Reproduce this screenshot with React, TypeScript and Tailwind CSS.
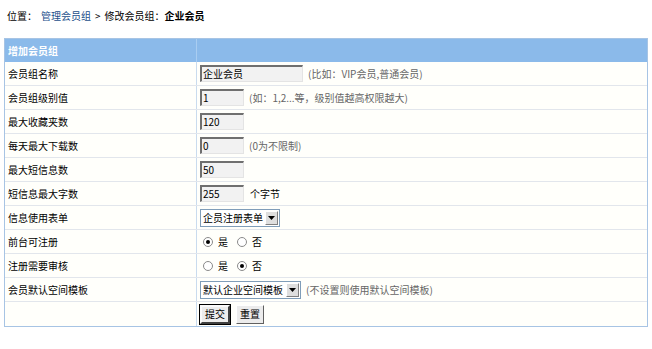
import React from 'react'

const font = { fontFamily: '"Noto Sans CJK SC", "Noto Sans", sans-serif' }

function TextBox({ value, wide }: { value: string; wide?: boolean }) {
  return (
    <div
      className={`h-[17px] ${wide ? 'w-[103px]' : 'w-[44px]'} bg-[#f2f2f2] border-t-2 border-l-2 border-b border-r border-t-[#6f6f6f] border-l-[#6f6f6f] border-b-[#e4e4e4] border-r-[#e4e4e4] flex items-center pl-[1px] text-[10px] leading-none text-black`}
    >
      {value}
    </div>
  )
}

function Select({ value, width }: { value: string; width: string }) {
  return (
    <div className={`h-[18px] ${width} border border-[#7f9db9] bg-white flex items-center text-[10px]`}>
      <span className="flex-1 pl-[2px] leading-none">{value}</span>
      <span className="h-[14px] w-[13px] mr-[1px] bg-[#dedede] border border-t-white border-l-white border-b-[#808080] border-r-[#808080] flex items-center justify-center">
        <svg width="7" height="4" viewBox="0 0 7 4">
          <path d="M0 0h7L3.5 4z" fill="#000" />
        </svg>
      </span>
    </div>
  )
}

function Radio({ checked }: { checked?: boolean }) {
  return (
    <span className="w-[10px] h-[10px] rounded-full border border-[#8a8a8a] bg-white flex items-center justify-center">
      {checked && <span className="w-[4px] h-[4px] rounded-full bg-black" />}
    </span>
  )
}

function YesNo({ yes }: { yes: boolean }) {
  return (
    <div className="flex items-center gap-[5px] pl-[3px] text-[10px]">
      <Radio checked={yes} />
      <span className="mr-[4px]">是</span>
      <Radio checked={!yes} />
      <span>否</span>
    </div>
  )
}

function Row({ label, children, last }: { label: string; children: React.ReactNode; last?: boolean }) {
  return (
    <div className={`flex h-[24px] bg-[#fffffb] ${last ? '' : 'border-b border-[#e2e6ec]'}`}>
      <div className="w-[192px] shrink-0 border-r border-[#c9dbee] flex items-center pl-[3px]">{label}</div>
      <div className="flex-1 flex items-center gap-[5px] pl-[3px]">{children}</div>
    </div>
  )
}

const Hint = ({ children }: { children: React.ReactNode }) => (
  <span className="text-[#666] text-[10px]">{children}</span>
)

export default function App() {
  return (
    <div className="w-[652px] h-[349px] bg-white text-black text-[10px]" style={font}>
      {/* breadcrumb */}
      <div className="h-[30px] flex items-center pl-[7px] pt-[1px]">
        <span>位置：</span>
        <span className="ml-[4px] text-[#1d4f8c]">管理会员组</span>
        <span className="mx-[4px]">&gt;</span>
        <span>修改会员组：</span>
        <span className="font-bold">企业会员</span>
      </div>

      <div className="mx-[4px] mt-[8px] border border-[#a7c4e4]">
        <div className="flex h-[23px] bg-[#8bbaea] text-white font-bold">
          <div className="w-[192px] border-r border-[#a9cdf1] flex items-center pl-[3px]">增加会员组</div>
          <div className="flex-1" />
        </div>

        <Row label="会员组名称">
          <TextBox value="企业会员" wide />
          <Hint>(比如：VIP会员,普通会员)</Hint>
        </Row>
        <Row label="会员组级别值">
          <TextBox value="1" />
          <Hint>(如：1,2...等，级别值越高权限越大)</Hint>
        </Row>
        <Row label="最大收藏夹数">
          <TextBox value="120" />
        </Row>
        <Row label="每天最大下载数">
          <TextBox value="0" />
          <Hint>(0为不限制)</Hint>
        </Row>
        <Row label="最大短信息数">
          <TextBox value="50" />
        </Row>
        <Row label="短信息最大字数">
          <TextBox value="255" />
          <span className="ml-[1px]">个字节</span>
        </Row>
        <Row label="信息使用表单">
          <Select value="企员注册表单" width="w-[80px]" />
        </Row>
        <Row label="前台可注册">
          <YesNo yes />
        </Row>
        <Row label="注册需要审核">
          <YesNo yes={false} />
        </Row>
        <Row label="会员默认空间模板">
          <Select value="默认企业空间模板" width="w-[101px]" />
          <Hint>(不设置则使用默认空间模板)</Hint>
        </Row>
        <Row label="" last>
          <button className="h-[19px] px-[3px] bg-[#ececec] border-2 border-t-[#fafafa] border-l-[#fafafa] border-b-[#404040] border-r-[#404040] outline outline-1 outline-black text-[10px] leading-none">
            提交
          </button>
          <button className="ml-[1px] h-[19px] px-[3px] bg-[#ececec] border border-t-white border-l-white border-b-[#606060] border-r-[#606060] text-[10px] leading-none">
            重置
          </button>
        </Row>
      </div>
    </div>
  )
}
